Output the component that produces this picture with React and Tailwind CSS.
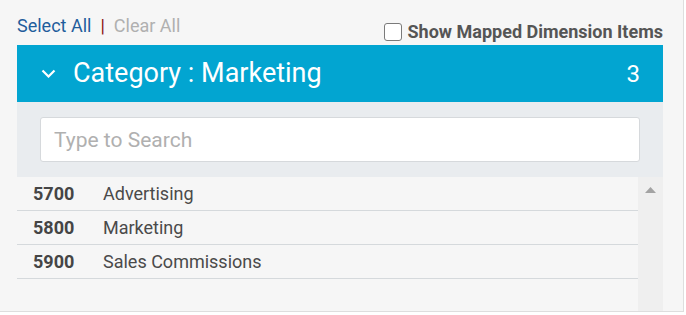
import React from 'react';

const items = [
    { code: '5700', name: 'Advertising' },
    { code: '5800', name: 'Marketing' },
    { code: '5900', name: 'Sales Commissions' },
];

export default function App() {
    return (
        <div className="w-[686px] h-[315px] bg-white font-['Roboto',sans-serif]">
            <div className="w-[684px] h-[312px] bg-[#f6f6f6] border-r border-b border-[#dedede] pl-[17px] pr-[20px] flex flex-col">
                <div className="h-[45px] flex justify-between">
                    <div className="mt-[15px] leading-[22px] text-[18px] flex">
                        <span className="text-[#1f5d9c]">Select All</span>
                        <span className="text-[#8b1010] mx-[9px]">|</span>
                        <span className="text-[#b0b0b0]">Clear All</span>
                    </div>
                    <label className="mt-[19px] leading-[22px] flex items-center gap-[6px] text-[18px] font-bold text-[#555555]">
                        <span className="w-[18px] h-[18px] rounded-[3px] border border-[#7a7a7a] bg-white"></span>
                        Show Mapped Dimension Items
                    </label>
                </div>

                <div className="h-[57px] bg-[#02a5d1] flex items-center pl-[24px] pr-[23px] text-white">
                    <svg width="15" height="9" viewBox="0 0 15 9" fill="none" stroke="currentColor" strokeWidth="2.2">
                        <path d="M1.5 1.5l6 6 6-6" />
                    </svg>
                    <span className="ml-[17px] text-[27px] leading-none flex-1">Category : Marketing</span>
                    <span className="text-[24px] leading-none">3</span>
                </div>

                <div className="h-[75px] bg-[#e9ecef] px-[23px] py-[15px]">
                    <input
                        type="text"
                        placeholder="Type to Search"
                        className="w-full h-[45px] bg-white border border-[#d6d9dc] rounded-[3px] pl-[13px] text-[21px] text-[#444] placeholder-[#b0b0b0] outline-none"
                    />
                </div>

                <div className="flex flex-1">
                    <div className="flex-1">
                        {items.map((item) => (
                            <div key={item.code} className="h-[34px] flex items-center border-b border-[#d5d9dc] pl-[16px] text-[18px] text-[#4a4a4a]">
                                <span className="w-[70px] font-bold text-[#454545]">{item.code}</span>
                                <span>{item.name}</span>
                            </div>
                        ))}
                    </div>
                    <div className="w-[25px] bg-[#efefef] flex justify-center pt-[10px]">
                        <svg width="11" height="6" viewBox="0 0 11 6">
                            <path d="M5.5 0L11 6H0z" fill="#a3a3a3" />
                        </svg>
                    </div>
                </div>
            </div>
        </div>
    );
}
